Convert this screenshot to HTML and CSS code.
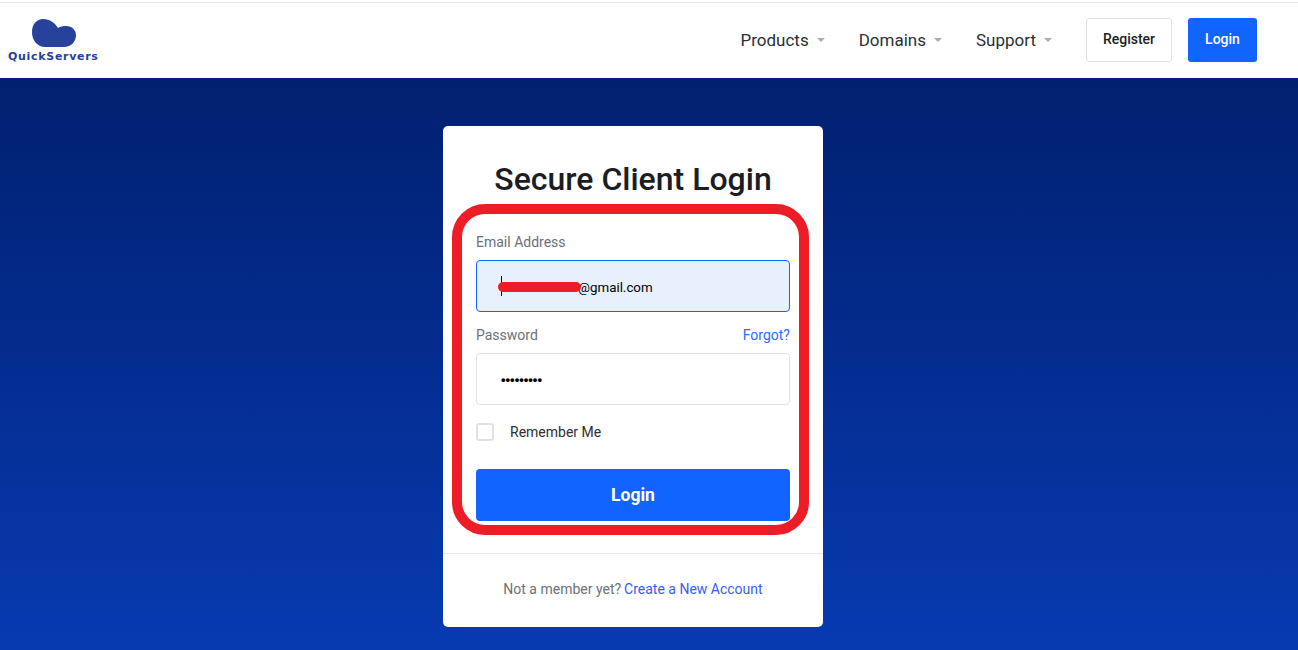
FILE: index.html
```html
<!DOCTYPE html>
<html lang="en">
<head>
<meta charset="utf-8">
<title>Secure Client Login</title>
<link rel="stylesheet" href="styles.css">
</head>
<body>
<header class="topbar">
  <a class="logo" href="#">
    <svg class="logo-cloud" width="46" height="29" viewBox="0 0 46 29" aria-hidden="true">
      <path d="M14 28 C6 28 1 21 1 13 C1 5 6 0 12 0 C19 0 24 4 27 9 C29 7.5 32 7 35 7 C41 7 45 11 45 16 C45 23 40 28 33 28 Z" fill="#26429a"/>
    </svg>
    <span class="logo-text">QuickServers</span>
  </a>
  <nav class="nav">
    <a class="nav-link" href="#">Products<span class="caret"></span></a>
    <a class="nav-link" href="#">Domains<span class="caret"></span></a>
    <a class="nav-link" href="#">Support<span class="caret"></span></a>
  </nav>
  <a class="btn btn-outline" href="#">Register</a>
  <a class="btn btn-primary" href="#">Login</a>
</header>
<main class="hero">
  <section class="card">
    <div class="card-body">
      <h1 class="title">Secure Client Login</h1>
      <form class="form">
        <div class="label-row"><label class="label">Email Address</label></div>
        <div class="input input-active">
          <span class="cursor"></span>
          <span class="input-text">@gmail.com</span>
          <span class="scribble"></span>
        </div>
        <div class="label-row label-row-pass"><label class="label">Password</label><a class="forgot" href="#">Forgot?</a></div>
        <div class="input">
          <span class="dots">•••••••••</span>
        </div>
        <label class="remember"><span class="checkbox"></span><span>Remember Me</span></label>
        <button class="submit" type="button">Login</button>
      </form>
      <div class="annotation"></div>
    </div>
    <div class="card-footer">Not a member yet? <a class="create" href="#">Create a New Account</a></div>
  </section>
</main>
</body>
</html>
```
FILE: styles.css
```css
* { box-sizing: border-box; }
html, body { margin: 0; height: 650px; overflow: hidden; }
body { font-family: Roboto, "Liberation Sans", sans-serif; background: #fff; color: #1a1d21; }
a { text-decoration: none; }

.topbar {
  margin-top: 2px;
  height: 76px;
  border-top: 1px solid #e9e9e9;
  background: #fff;
  display: flex;
  align-items: center;
  padding: 0 41px 1px 8px;
}
.logo { display: flex; flex-direction: column; align-items: flex-start; width: 92px; margin-right: auto; }
.logo-cloud { display: block; margin-left: 23px; }
.logo-text {
  font-family: "DejaVu Sans", sans-serif;
  font-weight: 700;
  font-size: 11px;
  line-height: 11px;
  letter-spacing: 0.7px;
  color: #26429a;
  margin-top: 3px;
}
.nav { display: flex; gap: 34px; margin-right: 34px; }
.nav-link { font-size: 17px; color: #2b2f36; display: flex; align-items: center; line-height: 24px; }
.caret {
  width: 0; height: 0;
  margin-left: 8px;
  border-left: 4px solid transparent;
  border-right: 4px solid transparent;
  border-top: 4px solid #a9acb2;
}
.btn {
  display: flex; align-items: center; justify-content: center;
  height: 44px;
  font-size: 14px;
  font-weight: 500;
  border-radius: 3px;
  padding-bottom: 2px;
}
.btn-outline { width: 86px; border: 1px solid #dfe1e5; color: #1a1d21; margin-right: 16px; }
.btn-primary { width: 69px; background: #1164ff; color: #fff; }

.hero {
  height: 572px;
  background: linear-gradient(180deg, #01206f 0%, #073ab1 100%);
  padding-top: 48px;
  display: flex;
  justify-content: center;
}
.card {
  width: 380px;
  height: 501px;
  margin-right: 32px;
  background: #fff;
  border-radius: 5px;
  display: flex;
  flex-direction: column;
}
.card-body { position: relative; height: 428px; padding: 33px 33px 0; border-bottom: 1px solid #e8e9ec; }
.title { margin: 0; font-size: 32px; font-weight: 500; line-height: 40px; text-align: center; color: #1a1d21; }
.form { margin-top: 33px; }
.label-row { display: flex; justify-content: space-between; height: 20px; line-height: 20px; margin-bottom: 8px; }
.label-row-pass { margin-top: 13px; }
.label { font-size: 14px; color: #6c7079; }
.forgot { font-size: 14px; color: #2f6bff; }
.input {
  position: relative;
  height: 52px;
  border: 1px solid #e0e2e7;
  border-radius: 4px;
  display: flex;
  align-items: center;
  padding-left: 24px;
  font-size: 13.33px;
  color: #000;
}
.input-active { background: #e8f0fd; border-color: #1164ff; }
.input-text { position: absolute; left: 101px; top: 18px; line-height: 18px; }
.cursor { position: absolute; left: 24px; top: 15px; width: 1px; height: 20px; background: #000; }
.scribble { position: absolute; left: 21px; top: 21px; width: 83px; height: 10px; border-radius: 5px; background: #ee1c27; }
.dots { font-size: 13px; line-height: 52px; margin-top: 2px; font-family: "Liberation Sans", sans-serif; font-weight: 700; }
.remember { display: flex; align-items: center; gap: 16px; margin-top: 17px; height: 20px; font-size: 14px; color: #2b2f36; }
.checkbox { width: 18px; height: 18px; border: 2px solid #dfe1e6; border-radius: 3px; background: #fff; }
.submit {
  display: block;
  width: 100%;
  height: 52px;
  margin-top: 27px;
  border: 0;
  border-radius: 4px;
  background: #1164ff;
  color: #fff;
  font-family: inherit;
  font-size: 17.5px;
  font-weight: 700;
}
.annotation {
  position: absolute;
  left: 9px; top: 78px;
  width: 357px; height: 331px;
  border: 10px solid #ee1c27;
  border-radius: 33px;
  pointer-events: none;
}
.card-footer { flex: 1; display: flex; align-items: center; justify-content: center; gap: 3px; font-size: 14px; color: #6c7079; padding-bottom: 3px; }
.create { color: #3a5cf5; }
```
